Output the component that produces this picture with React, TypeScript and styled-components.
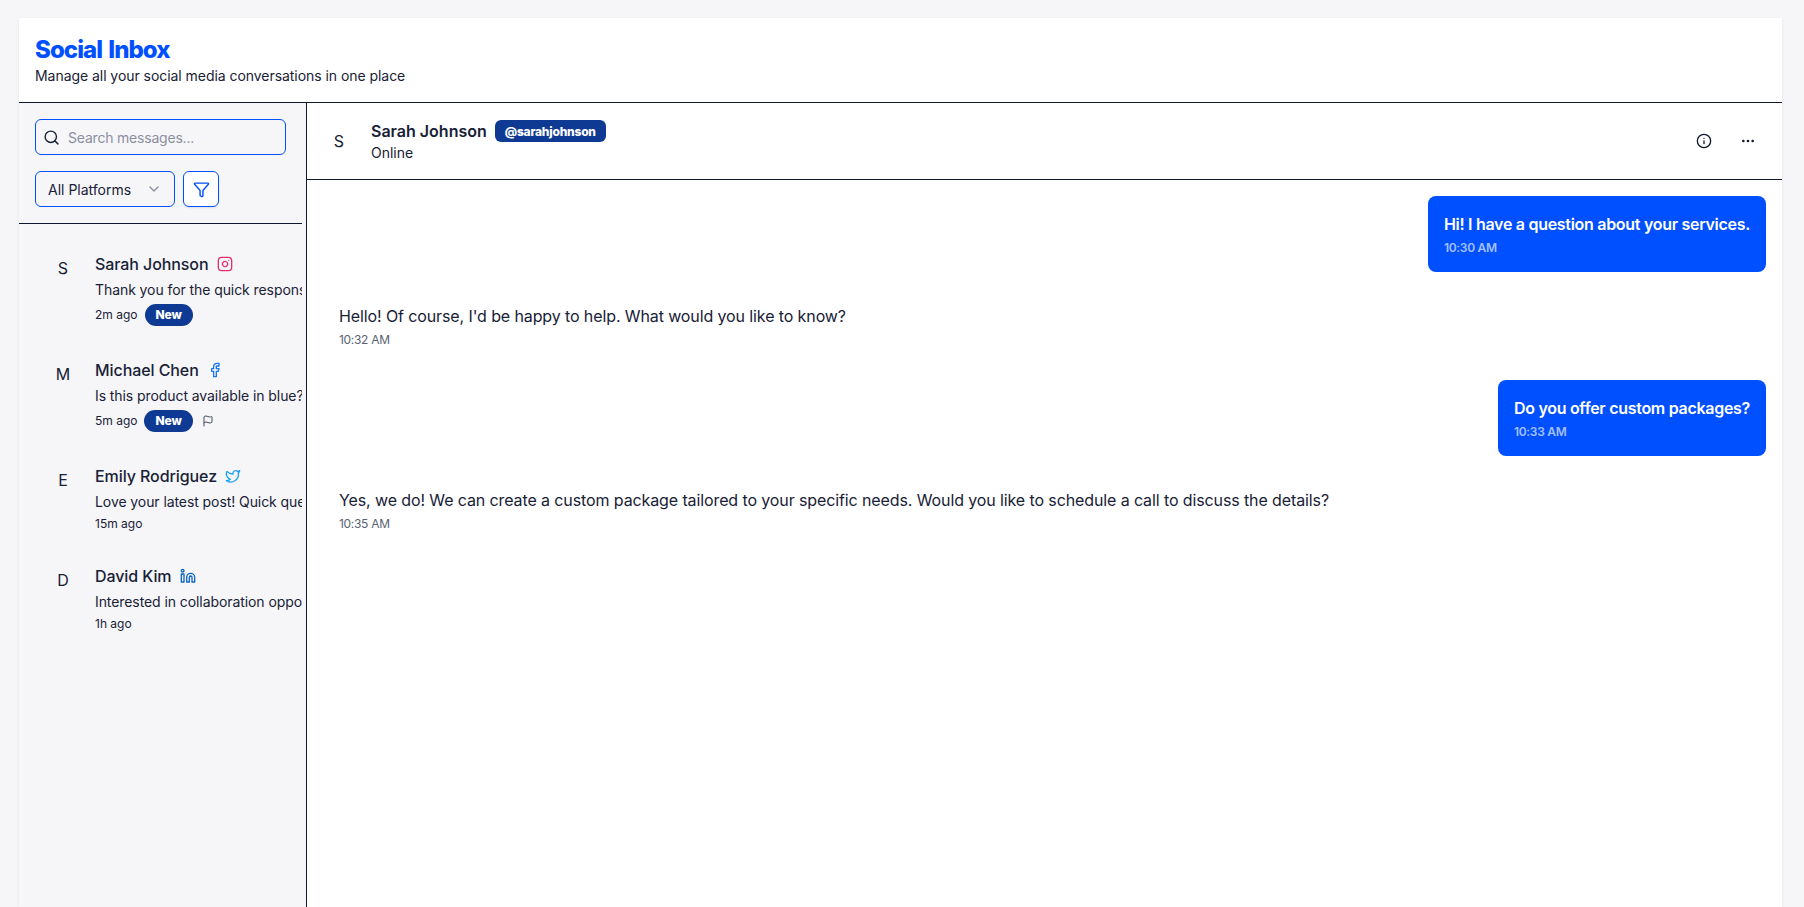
import styled, { createGlobalStyle } from "styled-components";
import { Search, ChevronDown, Filter, Instagram, Facebook, Twitter, Linkedin, Flag, Info, MoreHorizontal } from "lucide-react";

const GlobalStyle = createGlobalStyle`
  * { box-sizing: border-box; }
  html, body { margin: 0; height: 100%; }
  body {
    background: #f6f6f9;
    color: #182136;
    font-family: Inter, "Liberation Sans", sans-serif;
    overflow: hidden;
  }
`;

const Page = styled.div`
  height: 907px;
  padding: 18px 22px 0 19px;
`;

const Card = styled.div`
  height: 889px;
  background: #fff;
  display: flex;
  flex-direction: column;
  box-shadow: 0 1px 3px rgba(20, 30, 60, 0.08);
`;

const Header = styled.header`
  height: 85px;
  padding: 16px 16px 0;
  border-bottom: 1px solid #10182f;
`;

const Title = styled.h1`
  margin: 0;
  height: 32px;
  font-size: 24px;
  line-height: 32px;
  font-weight: 800;
  color: #0050ff;
  letter-spacing: -0.95px;
  word-spacing: 2px;
`;

const Subtitle = styled.p`
  margin: 0;
  font-size: 14px;
  line-height: 20px;
  letter-spacing: -0.05px;
`;

const Body = styled.div`
  flex: 1;
  display: flex;
  min-height: 0;
`;

const Sidebar = styled.aside`
  width: 288px;
  flex: none;
  padding-right: 4px;
  background: #f6f6f9;
  border-right: 1px solid #10182f;
`;

const Controls = styled.div`
  padding: 16px;
  border-bottom: 1px solid #10182f;
  display: flex;
  flex-direction: column;
  gap: 16px;
`;

const SearchBox = styled.label`
  height: 36px;
  padding: 0 7px;
  display: flex;
  align-items: center;
  gap: 8px;
  border: 1px solid #0050ff;
  border-radius: 6px;
  font-size: 14px;
  letter-spacing: -0.2px;
  color: #8b90a0;
`;

const FilterRow = styled.div`
  display: flex;
  gap: 8px;
`;

const Select = styled.div`
  width: 140px;
  height: 36px;
  padding: 0 12px;
  display: flex;
  align-items: center;
  justify-content: space-between;
  border: 1px solid #0050ff;
  border-radius: 6px;
  font-size: 14px;
`;

const FilterButton = styled.button`
  width: 36px;
  height: 36px;
  padding: 0;
  display: flex;
  align-items: center;
  justify-content: center;
  background: #fff;
  border: 1px solid #0050ff;
  border-radius: 6px;
  color: #0050ff;
  box-shadow: 0 1px 2px rgba(20, 30, 60, 0.1);
`;

const List = styled.div`
  padding: 8px;
  overflow: hidden;
`;

const Row = styled.div`
  padding: 16px 16px 12px;
  display: flex;
  gap: 12px;
`;

const Avatar = styled.div`
  width: 40px;
  height: 40px;
  flex: none;
  display: flex;
  align-items: center;
  justify-content: center;
  font-size: 16px;
`;

const RowMain = styled.div`
  flex: none;
  width: 300px;
  padding-top: 4px;
`;

const NameLine = styled.div`
  height: 24px;
  display: flex;
  align-items: center;
  gap: 8px;
  font-size: 16px;
  font-weight: 500;
  letter-spacing: -0.08px;
`;

const Preview = styled.div`
  margin-top: 4px;
  font-size: 14px;
  line-height: 20px;
  letter-spacing: -0.08px;
  white-space: nowrap;
`;

const MetaLine = styled.div`
  margin-top: 4px;
  display: flex;
  align-items: center;
  gap: 7px;
  font-size: 12px;
  line-height: 16px;
`;

const NewBadge = styled.span`
  height: 22px;
  padding: 0 11px;
  display: flex;
  align-items: center;
  border-radius: 11px;
  background: #0f3a93;
  color: #fff;
  font-size: 12px;
  font-weight: 800;
  letter-spacing: -0.1px;
`;

const FlagMark = styled(Flag)`
  color: #454b5b;
  margin-left: 2px;
`;

const Chat = styled.main`
  flex: 1;
  min-width: 0;
  display: flex;
  flex-direction: column;
`;

const ChatHeader = styled.div`
  height: 77px;
  padding: 0 16px 0 12px;
  display: flex;
  align-items: center;
  gap: 12px;
  border-bottom: 1px solid #10182f;
`;

const ChatWho = styled.div`
  flex: 1;
`;

const ChatName = styled.div`
  display: flex;
  align-items: center;
  gap: 8px;
  height: 24px;
  font-size: 16px;
  font-weight: 600;
`;

const Handle = styled.span`
  height: 22px;
  padding: 0 10px;
  display: flex;
  align-items: center;
  border-radius: 6px;
  background: #0f3a93;
  color: #fff;
  font-size: 12px;
  font-weight: 800;
  letter-spacing: -0.22px;
`;

const ChatStatus = styled.div`
  font-size: 14px;
  line-height: 20px;
`;

const HeaderActions = styled.div`
  display: flex;
  gap: 8px;
`;

const IconButton = styled.button`
  width: 36px;
  height: 36px;
  padding: 0;
  display: flex;
  align-items: center;
  justify-content: center;
  border: none;
  background: none;
  color: #10182f;
`;

const Thread = styled.div`
  padding: 16px;
  display: flex;
  flex-direction: column;
  gap: 16px;
`;

const Bubble = styled.div<{ $mine?: boolean }>`
  align-self: ${(p) => (p.$mine ? "flex-end" : "flex-start")};
  height: 76px;
  padding: 16px;
  border-radius: 8px;
  background: ${(p) => (p.$mine ? "#0050ff" : "#fff")};
  color: ${(p) => (p.$mine ? "#fff" : "#182136")};
`;

const BubbleText = styled.div<{ $mine?: boolean }>`
  font-size: 16px;
  line-height: 24px;
  font-weight: ${(p) => (p.$mine ? 600 : 400)};
  letter-spacing: ${(p) => (p.$mine ? "-0.29px" : "-0.11px")};
`;

const BubbleTime = styled.div<{ $mine?: boolean }>`
  margin-top: 4px;
  font-size: 12px;
  line-height: 16px;
  font-weight: ${(p) => (p.$mine ? 600 : 400)};
  letter-spacing: -0.3px;
  color: ${(p) => (p.$mine ? "rgba(255,255,255,0.65)" : "#5b6272")};
`;

const conversations = [
  { initial: "S", name: "Sarah Johnson", icon: <Instagram size={16} color="#e1306c" />, text: "Thank you for the quick response!", time: "2m ago", isNew: true },
  { initial: "M", name: "Michael Chen", icon: <Facebook size={16} color="#1877f2" />, text: "Is this product available in blue?", time: "5m ago", isNew: true, flagged: true },
  { initial: "E", name: "Emily Rodriguez", icon: <Twitter size={16} color="#1da1f2" />, text: "Love your latest post! Quick question about it", time: "15m ago" },
  { initial: "D", name: "David Kim", icon: <Linkedin size={16} color="#0a66c2" />, text: "Interested in collaboration opportunities", time: "1h ago" },
];

const messages = [
  { mine: true, text: "Hi! I have a question about your services.", time: "10:30 AM" },
  { mine: false, text: "Hello! Of course, I'd be happy to help. What would you like to know?", time: "10:32 AM" },
  { mine: true, text: "Do you offer custom packages?", time: "10:33 AM" },
  { mine: false, text: "Yes, we do! We can create a custom package tailored to your specific needs. Would you like to schedule a call to discuss the details?", time: "10:35 AM" },
];

function App() {
  return (
    <Page>
      <GlobalStyle />
      <Card>
        <Header>
          <Title>Social Inbox</Title>
          <Subtitle>Manage all your social media conversations in one place</Subtitle>
        </Header>
        <Body>
          <Sidebar>
            <Controls>
              <SearchBox>
                <Search size={17} color="#182136" />
                Search messages...
              </SearchBox>
              <FilterRow>
                <Select>
                  All Platforms
                  <ChevronDown size={16} color="#8b90a0" />
                </Select>
                <FilterButton>
                  <Filter size={17} />
                </FilterButton>
              </FilterRow>
            </Controls>
            <List>
              {conversations.map((c) => (
                <Row key={c.name}>
                  <Avatar>{c.initial}</Avatar>
                  <RowMain>
                    <NameLine>
                      {c.name}
                      {c.icon}
                    </NameLine>
                    <Preview>{c.text}</Preview>
                    <MetaLine>
                      {c.time}
                      {c.isNew && <NewBadge>New</NewBadge>}
                      {c.flagged && <FlagMark size={12} />}
                    </MetaLine>
                  </RowMain>
                </Row>
              ))}
            </List>
          </Sidebar>
          <Chat>
            <ChatHeader>
              <Avatar>S</Avatar>
              <ChatWho>
                <ChatName>
                  Sarah Johnson
                  <Handle>@sarahjohnson</Handle>
                </ChatName>
                <ChatStatus>Online</ChatStatus>
              </ChatWho>
              <HeaderActions>
                <IconButton>
                  <Info size={16} />
                </IconButton>
                <IconButton>
                  <MoreHorizontal size={16} />
                </IconButton>
              </HeaderActions>
            </ChatHeader>
            <Thread>
              {messages.map((m) => (
                <Bubble key={m.time} $mine={m.mine}>
                  <BubbleText $mine={m.mine}>{m.text}</BubbleText>
                  <BubbleTime $mine={m.mine}>{m.time}</BubbleTime>
                </Bubble>
              ))}
            </Thread>
          </Chat>
        </Body>
      </Card>
    </Page>
  );
}

export default App;
